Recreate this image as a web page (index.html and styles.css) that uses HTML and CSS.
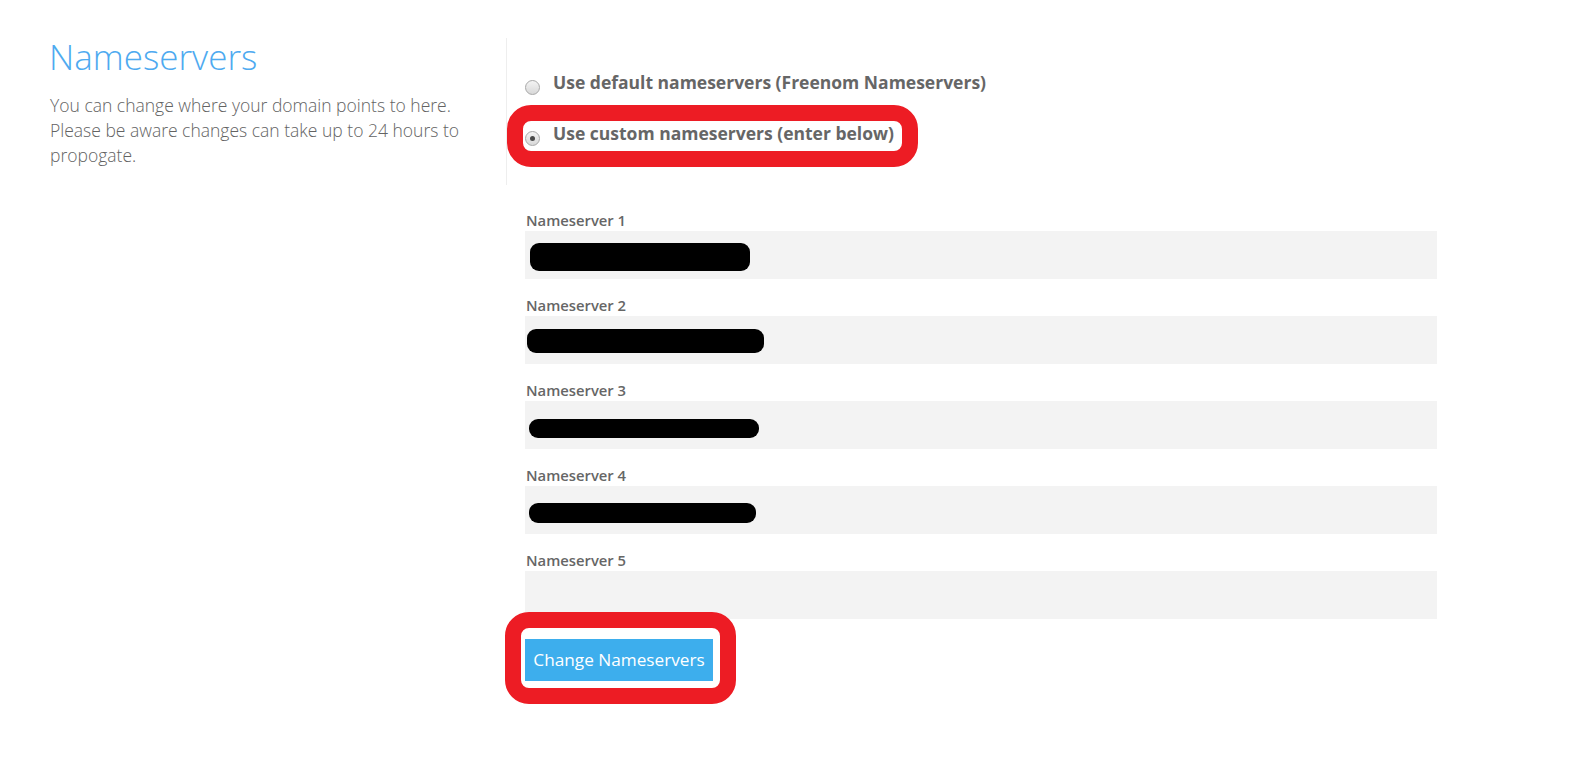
FILE: index.html
```html
<!DOCTYPE html>
<html lang="en">
<head>
<meta charset="utf-8">
<title>Nameservers</title>
<link rel="stylesheet" href="styles.css">
</head>
<body>
<div class="page">
  <div class="top-row">
    <div class="intro">
      <h1 class="title">Nameservers</h1>
      <p class="desc">You can change where your domain points to here. Please be aware changes can take up to 24 hours to propogate.</p>
    </div>
    <div class="choices">
      <div class="choice">
        <span class="radio"></span>
        <span class="choice-label">Use default nameservers (Freenom Nameservers)</span>
      </div>
      <div class="choice choice-custom">
        <span class="radio radio-checked"></span>
        <span class="choice-label">Use custom nameservers (enter below)</span>
        <span class="highlight highlight-choice"></span>
      </div>
    </div>
  </div>
  <div class="fields">
    <div class="field">
      <div class="field-label">Nameserver 1</div>
      <div class="field-input"><span class="redact redact-1"></span></div>
    </div>
    <div class="field">
      <div class="field-label">Nameserver 2</div>
      <div class="field-input"><span class="redact redact-2"></span></div>
    </div>
    <div class="field">
      <div class="field-label">Nameserver 3</div>
      <div class="field-input"><span class="redact redact-3"></span></div>
    </div>
    <div class="field">
      <div class="field-label">Nameserver 4</div>
      <div class="field-input"><span class="redact redact-4"></span></div>
    </div>
    <div class="field">
      <div class="field-label">Nameserver 5</div>
      <div class="field-input"></div>
    </div>
    <div class="actions">
      <span class="button-wrap">
        <span class="button">Change Nameservers</span>
        <span class="highlight highlight-button"></span>
      </span>
    </div>
  </div>
</div>
</body>
</html>
```
FILE: styles.css
```css
html, body {
  margin: 0;
  padding: 0;
  background: #ffffff;
  min-height: 100%;
}
body {
  font-family: "Open Sans", "Liberation Sans", sans-serif;
  color: #666666;
}
.page {
  padding: 37px 0 60px 49px;
}
.top-row {
  display: flex;
  height: 148px;
}
.intro {
  width: 457px;
  box-sizing: border-box;
  padding-right: 34px;
}
.title {
  margin: 0;
  font-size: 35px;
  line-height: 40px;
  font-weight: 300;
  color: #4eaaf0;
}
.desc {
  margin: 16px 0 0 1px;
  font-size: 17.5px;
  line-height: 25px;
  font-weight: 300;
  color: #636363;
}
.choices {
  border-left: 1px solid #eeeeee;
  padding: 32px 0 0 18px;
  margin-top: 1px;
}
.choice {
  display: flex;
  align-items: flex-start;
  gap: 13px;
  position: relative;
}
.choice-custom {
  margin-top: 26px;
}
.choice-label {
  font-size: 17.5px;
  line-height: 24px;
  font-weight: 700;
  color: #666666;
}
.radio {
  width: 13px;
  height: 13px;
  margin-top: 10px;
  border: 1px solid #a8a8a8;
  border-radius: 50%;
  background: linear-gradient(#f4f4f4, #d8d8d8);
  flex: none;
  display: flex;
  align-items: center;
  justify-content: center;
}
.radio-checked::after {
  content: "";
  width: 5px;
  height: 5px;
  border-radius: 50%;
  background: #4a4a4a;
}
.highlight {
  position: absolute;
  border: 16px solid #ed1c24;
  box-sizing: border-box;
  border-radius: 24px;
  pointer-events: none;
}
.highlight-choice {
  left: -18px;
  top: -16px;
  width: 411px;
  height: 62px;
}
.fields {
  margin: 24px 0 0 476px;
  width: 912px;
}
.field {
  margin-bottom: 15px;
}
.field-label {
  font-size: 14.8px;
  line-height: 20px;
  font-weight: 600;
  color: #666666;
  margin: 0 0 2px 1px;
  position: relative;
  top: 1px;
}
.field-input {
  height: 48px;
  background: #f3f3f3;
  overflow: hidden;
}
.redact {
  display: block;
  background: #000000;
  border-radius: 9px;
}
.redact-1 { width: 220px; height: 28px; margin: 12px 0 0 5px; }
.redact-2 { width: 237px; height: 24px; margin: 13px 0 0 2px; }
.redact-3 { width: 230px; height: 19px; margin: 18px 0 0 4px; }
.redact-4 { width: 227px; height: 20px; margin: 17px 0 0 4px; }
.actions {
  padding-top: 5px;
}
.button-wrap {
  position: relative;
  display: inline-block;
  vertical-align: top;
}
.button {
  display: block;
  width: 188px;
  height: 42px;
  box-sizing: border-box;
  background: #3daeed;
  color: #ffffff;
  font-size: 17.2px;
  line-height: 42px;
  text-align: center;
}
.highlight-button {
  left: -20px;
  top: -27px;
  width: 231px;
  height: 92px;
}
```
